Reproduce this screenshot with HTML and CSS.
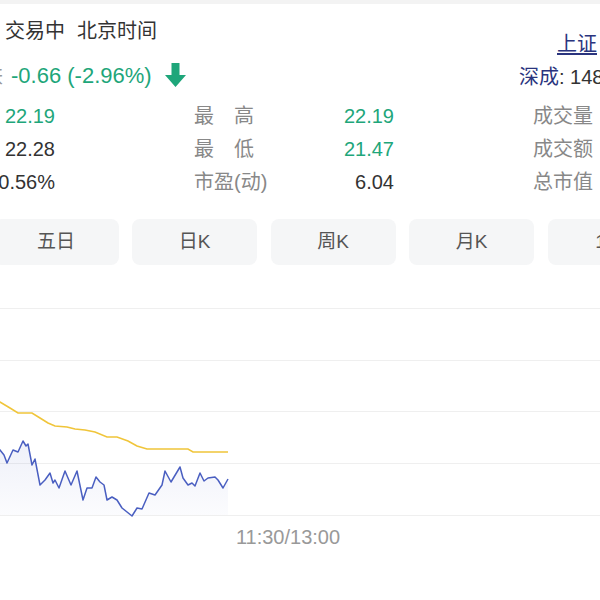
FILE: index.html
```html
<!DOCTYPE html>
<html lang="zh-CN">
<head>
    <meta charset="UTF-8">
    <meta name="viewport" content="width=device-width, initial-scale=1.0">
    <title>行情</title>
    <link rel="stylesheet" href="styles.css">
</head>
<body>
    <div class="topbar"></div>
    <div class="quote">
        <div class="head">
            <div class="head-main">
                <div class="status">
                    <span class="stock-name">宝钢股份</span>
                    <span>交易中</span>
                    <span>北京时间</span>
                </div>
                <div class="change-row">
                    <span class="price">涨跌</span>
                    <span class="change down">-0.66 (-2.96%)</span>
                    <svg class="arrow" width="21" height="24" viewBox="0 0 21 24">
                        <path d="M6.5 0 H14.5 V12 H21 L10.5 24 L0 12 H6.5 Z" fill="#1ea67a"/>
                    </svg>
                </div>
            </div>
            <div class="index">
                <div class="index-line sh"><a href="#">上证</a></div>
                <div class="index-line"><span class="index-name">深成</span>: 14862.41</div>
            </div>
        </div>

        <div class="stats">
            <div class="stat"><span class="label">今　开</span><span class="value down">22.19</span></div>
            <div class="stat"><span class="label">最　高</span><span class="value down">22.19</span></div>
            <div class="stat"><span class="label">成交量</span><span class="value">43.2万手</span></div>
            <div class="stat"><span class="label">昨　收</span><span class="value">22.28</span></div>
            <div class="stat"><span class="label">最　低</span><span class="value down">21.47</span></div>
            <div class="stat"><span class="label">成交额</span><span class="value">9.4亿</span></div>
            <div class="stat"><span class="label">换手率</span><span class="value">0.56%</span></div>
            <div class="stat"><span class="label">市盈(动)</span><span class="value">6.04</span></div>
            <div class="stat"><span class="label">总市值</span><span class="value">486亿</span></div>
        </div>

        <div class="periods">
            <div class="period">分时</div>
            <div class="period">五日</div>
            <div class="period">日K</div>
            <div class="period">周K</div>
            <div class="period">月K</div>
            <div class="period">1分</div>
            <div class="period">5分</div>
        </div>

        <div class="chart">
            <svg width="900" height="220" viewBox="-145 300 900 220">
                <defs>
                    <linearGradient id="area" x1="0" y1="0" x2="0" y2="1">
                        <stop offset="0" stop-color="#4a5fc1" stop-opacity="0.13"/>
                        <stop offset="1" stop-color="#4a5fc1" stop-opacity="0.02"/>
                    </linearGradient>
                </defs>
                <g stroke="#efefef" stroke-width="1">
                    <line x1="-145" y1="308.5" x2="755" y2="308.5"/>
                    <line x1="-145" y1="360.5" x2="755" y2="360.5"/>
                    <line x1="-145" y1="411.5" x2="755" y2="411.5"/>
                    <line x1="-145" y1="463.5" x2="755" y2="463.5"/>
                    <line x1="-145" y1="515.5" x2="755" y2="515.5"/>
                </g>
                <polygon fill="url(#area)" points="-145,515 -145,400 -100,410 -60,418 -30,425 -20,438 -10,430 -4,445 0,450 4,455 7,463 13,450 18,452 23,441 26,446 28,444 32,465 35,459 40,485 45,480 50,473 53,483 55,480 59,488 65,471 71,485 77,471 83,500 87,488 92,488 96,477 100,482 104,485 107,500 112,497 117,500 122,508 132,516 137,508 142,509 149,493 155,495 162,485 165,471 171,482 180,467 183,478 188,485 192,483 195,486 200,473 204,481 208,478 215,477 218,480 223,488 228,479 228,515"/>
                <polyline fill="none" stroke="#f0c53a" stroke-width="1.6" points="-145,370 -100,382 -50,392 -20,397 0,402 10,408 18,413 32,413 40,418 48,423 55,426 67,427 75,429 85,430 95,432 107,437 117,437 128,441 137,446 147,449 188,449 193,452 228,452"/>
                <polyline fill="none" stroke="#4a5fc1" stroke-width="1.5" stroke-linejoin="round" points="-145,400 -100,410 -60,418 -30,425 -20,438 -10,430 -4,445 0,450 4,455 7,463 13,450 18,452 23,441 26,446 28,444 32,465 35,459 40,485 45,480 50,473 53,483 55,480 59,488 65,471 71,485 77,471 83,500 87,488 92,488 96,477 100,482 104,485 107,500 112,497 117,500 122,508 132,516 137,508 142,509 149,493 155,495 162,485 165,471 171,482 180,467 183,478 188,485 192,483 195,486 200,473 204,481 208,478 215,477 218,480 223,488 228,479"/>
            </svg>
            <div class="axis">
                <span>09:30</span>
                <span>11:30/13:00</span>
                <span>15:00</span>
            </div>
        </div>
    </div>
</body>
</html>
```

FILE: styles.css
```css
body {
    margin: 0;
    overflow: hidden;
    background: #fff;
    color: #333;
    font-family: "Liberation Sans", Arial, "Noto Sans CJK SC", sans-serif;
    font-size: 20px;
}
.topbar {
    height: 4px;
    background: #f3f3f3;
}
.quote {
    margin-left: -145px;
    width: 900px;
}
.head {
    display: flex;
    justify-content: space-between;
    padding-top: 13px;
}
.status {
    display: flex;
    gap: 12px;
    line-height: 28px;
}
.stock-name {
    width: 138px;
}
.change-row {
    display: flex;
    align-items: center;
    margin-top: 17px;
    line-height: 28px;
}
.price {
    width: 148px;
    text-align: right;
    color: #999;
}
.change {
    margin-left: 8px;
    font-size: 22px;
}
.arrow {
    margin-left: 13px;
    margin-top: -2px;
}
.down { color: #1ea67a; }
.index {
    width: 236px;
    padding-top: 13px;
    line-height: 28px;
}
.index-line.sh {
    padding-left: 38px;
}
.index-line + .index-line {
    margin-top: 5px;
}
.index a,
.index-name {
    color: #2a347e;
}
.index a {
    text-decoration: underline;
    text-underline-offset: 2px;
}
.stats {
    display: grid;
    grid-template-columns: repeat(3, 200px);
    column-gap: 139px;
    margin-top: 9px;
    line-height: 33px;
}
.stat {
    display: flex;
    justify-content: space-between;
}
.label { color: #888; }
.periods {
    display: flex;
    gap: 13.5px;
    margin-top: 20px;
}
.period {
    flex: none;
    width: 125px;
    height: 46px;
    line-height: 46px;
    border-radius: 8px;
    background: #f5f6f7;
    color: #555;
    font-size: 19px;
    text-align: center;
}
.chart {
    margin-top: 35px;
}
.chart svg {
    display: block;
}
.axis {
    display: flex;
    justify-content: space-between;
    width: 866px;
    margin-top: 5px;
    line-height: 24px;
    color: #999;
}
```
